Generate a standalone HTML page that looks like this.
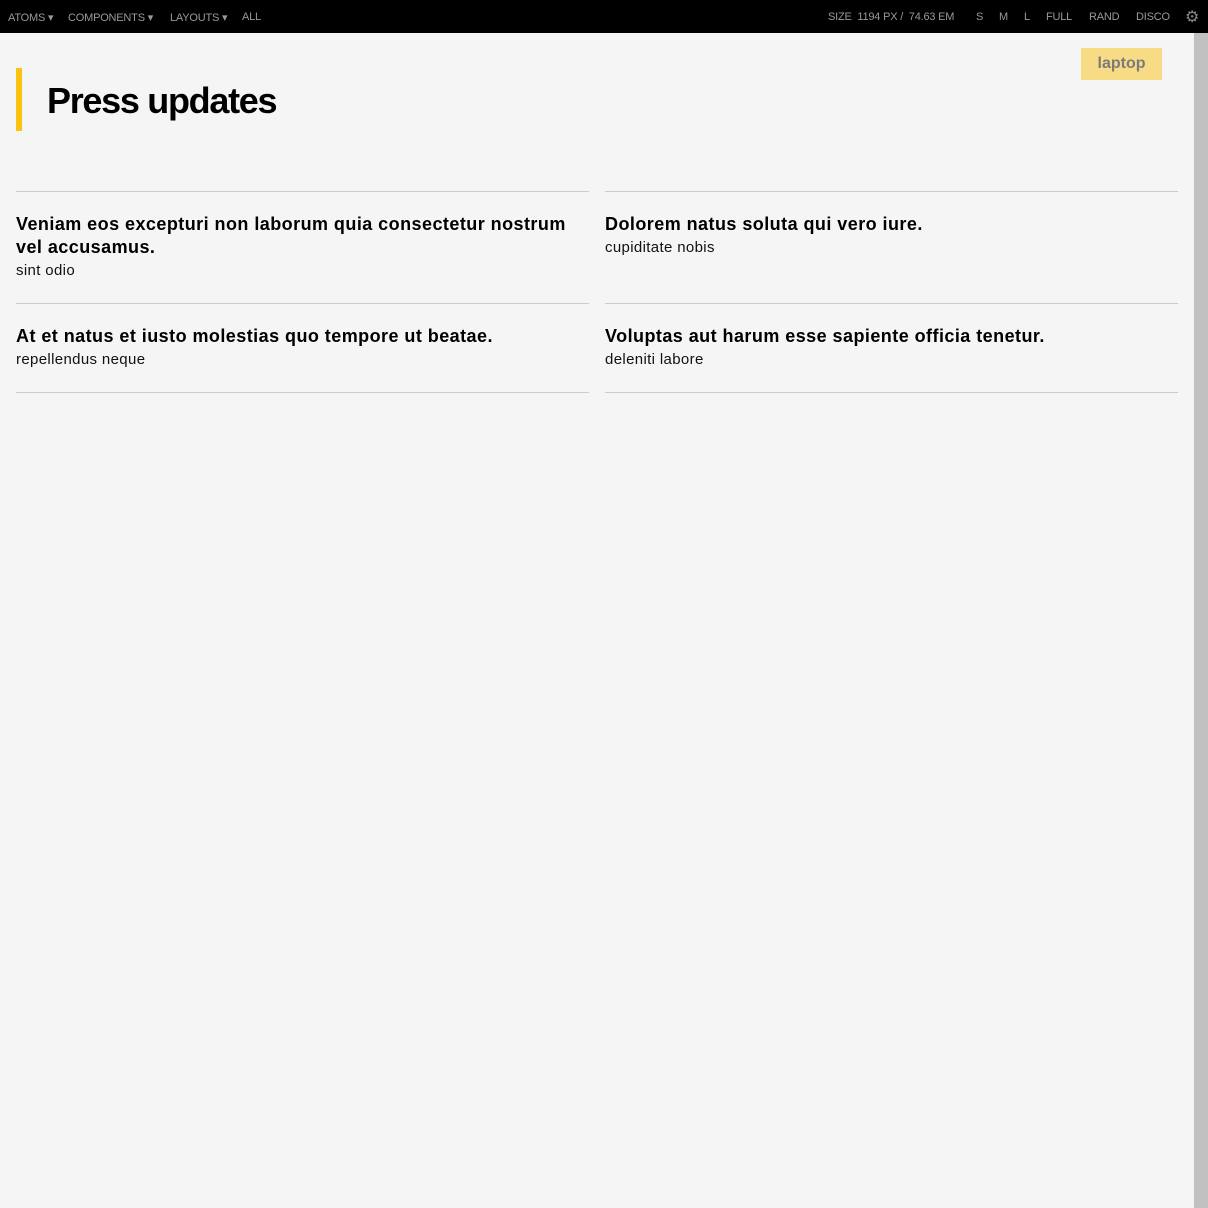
<!DOCTYPE html>
<html><head><style>
body{margin:0;width:1208px;height:1208px;background:#f5f5f5;font-family:"Liberation Sans",sans-serif;position:relative;overflow:hidden}
.bar{position:absolute;top:0;left:0;width:1208px;height:33px;background:#000;color:#999;font-size:11px}
.bar span{position:absolute;top:11px;letter-spacing:-0.2px}
.sb{position:absolute;top:33px;right:0;width:14px;height:1175px;background:#c1c1c1}
.accent{position:absolute;left:16px;top:68px;width:6px;height:63px;background:#f9c30f}
h1{position:absolute;left:47px;top:80px;margin:0;font-size:36px;font-weight:bold;letter-spacing:-1.3px;color:#000}
.lap{position:absolute;left:1081px;top:48px;width:81px;height:32px;background:#f8dc85;color:#7b7b7b;font-weight:bold;font-size:16px;text-align:center;line-height:31px}
.line{position:absolute;height:1px;background:#ccc;width:573px}
.t{position:absolute;font-size:18px;font-weight:bold;color:#000;line-height:23px;width:573px;letter-spacing:0.45px}
.s{position:absolute;font-size:15px;color:#111;letter-spacing:0.35px}
</style></head><body>
<div class="bar">
<span style="left:8px">ATOMS ▾</span><span style="left:68px">COMPONENTS ▾</span><span style="left:170px">LAYOUTS ▾</span><span style="left:242px">ALL</span>
<span style="left:828px">SIZE &nbsp;1194 PX / &nbsp;74.63 EM</span><span style="left:976px">S</span><span style="left:999px">M</span><span style="left:1024px">L</span><span style="left:1046px">FULL</span><span style="left:1089px">RAND</span><span style="left:1136px">DISCO</span>
<span style="left:1185px;top:7px;font-size:16px;color:#888">⚙</span>
</div>
<div class="sb"></div>
<div class="accent"></div>
<h1>Press updates</h1>
<div class="lap">laptop</div>
<div class="line" style="left:16px;top:191px"></div><div class="line" style="left:605px;top:191px"></div>
<div class="t" style="left:16px;top:213px">Veniam eos excepturi non laborum quia consectetur nostrum<br>vel accusamus.</div>
<div class="s" style="left:16px;top:262px">sint odio</div>
<div class="t" style="left:605px;top:213px">Dolorem natus soluta qui vero iure.</div>
<div class="s" style="left:605px;top:239px">cupiditate nobis</div>
<div class="line" style="left:16px;top:303px"></div><div class="line" style="left:605px;top:303px"></div>
<div class="t" style="left:16px;top:325px">At et natus et iusto molestias quo tempore ut beatae.</div>
<div class="s" style="left:16px;top:351px">repellendus neque</div>
<div class="t" style="left:605px;top:325px">Voluptas aut harum esse sapiente officia tenetur.</div>
<div class="s" style="left:605px;top:351px">deleniti labore</div>
<div class="line" style="left:16px;top:392px"></div><div class="line" style="left:605px;top:392px"></div>
</body></html>
